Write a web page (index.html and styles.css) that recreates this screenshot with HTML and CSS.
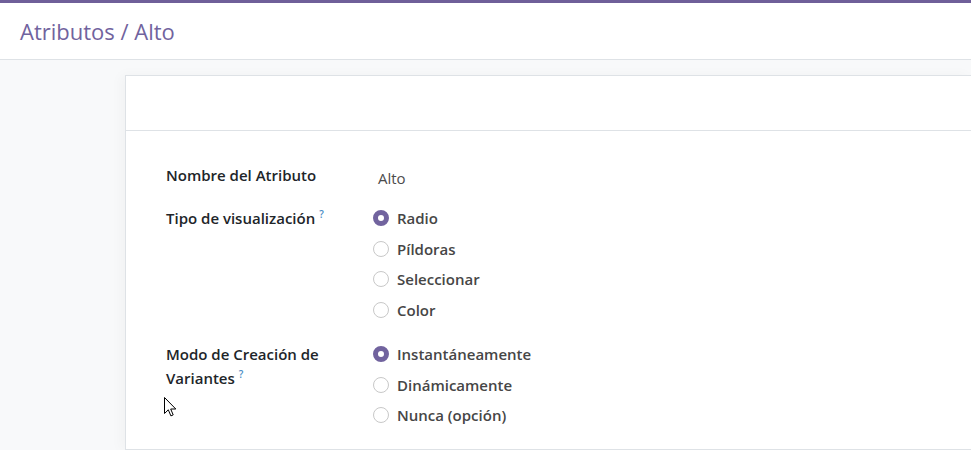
FILE: index.html
```html
<!DOCTYPE html>
<html lang="es">
<head>
<meta charset="utf-8">
<title>Atributos / Alto</title>
<link rel="stylesheet" href="styles.css">
</head>
<body>
<div class="topbar"></div>
<header class="control-panel">
  <h1 class="breadcrumb">Atributos / Alto</h1>
</header>
<main class="content">
  <section class="sheet">
    <div class="statusbar"></div>
    <div class="form">
      <div class="row row-name">
        <div class="label">Nombre del Atributo</div>
        <div class="value">Alto</div>
      </div>
      <div class="row">
        <div class="label">Tipo de visualización<sup>?</sup></div>
        <div class="options">
          <div class="option"><span class="radio checked"></span>Radio</div>
          <div class="option"><span class="radio"></span>Píldoras</div>
          <div class="option"><span class="radio"></span>Seleccionar</div>
          <div class="option"><span class="radio"></span>Color</div>
        </div>
      </div>
      <div class="row">
        <div class="label">Modo de Creación de Variantes<sup>?</sup></div>
        <div class="options">
          <div class="option"><span class="radio checked"></span>Instantáneamente</div>
          <div class="option"><span class="radio"></span>Dinámicamente</div>
          <div class="option"><span class="radio"></span>Nunca (opción)</div>
        </div>
      </div>
    </div>
  </section>
</main>
<svg class="cursor" width="13" height="21" viewBox="0 0 13 21" xmlns="http://www.w3.org/2000/svg">
  <path d="M0.5 0.5 L0.5 16.5 L4.3 12.8 L6.9 18.9 L9.2 17.9 L6.7 12 L11.8 12 Z" fill="#fff" stroke="#000" stroke-width="1" stroke-linejoin="miter"/>
</svg>
</body>
</html>
```
FILE: styles.css
```css
* { box-sizing: border-box; }
html, body { margin: 0; height: 100%; }
body {
  font-family: "Open Sans", "Noto Sans", sans-serif;
  font-size: 15px;
  color: #212529;
  background: #f8f9fa;
  overflow: hidden;
}
.topbar { height: 3px; background: #6f5f99; }
.control-panel {
  height: 57px;
  background: #fff;
  border-bottom: 1px solid #dee2e6;
  display: flex;
  align-items: center;
  padding-left: 20px;
}
.breadcrumb {
  margin: 0;
  font-size: 22px;
  font-weight: 400;
  color: #71639e;
}
.content {
  padding: 15px 0 0 125px;
  height: calc(100% - 60px);
}
.sheet {
  background: #fff;
  border: 1px solid #dee2e6;
  border-right: none;
  height: 100%;
  box-shadow: -4px 0 12px rgba(0,0,0,0.03);
}
.statusbar {
  height: 55px;
  border-bottom: 1px solid #dee2e6;
}
.form { padding: 32px 0 0 40px; }
.row {
  display: grid;
  grid-template-columns: 207px 1fr;
  margin-bottom: 13px;
}
.row:nth-child(2) { margin-bottom: 20px; }
.label {
  font-weight: 600;
  line-height: 24px;
  width: 180px;
  color: #212529;
}
.label sup {
  display: inline-block;
  font-size: 10px;
  line-height: 10px;
  color: #4a8cc4;
  margin-left: 4px;
  font-weight: 600;
  vertical-align: 6px;
}
.value {
  height: 30px;
  line-height: 30px;
  padding-left: 5px;
  color: #4c4c4c;
  font-weight: 400;
}
.option {
  display: flex;
  align-items: center;
  height: 24px;
  margin-bottom: 6.7px;
  font-weight: 600;
  color: #464646;
}
.option:last-child { margin-bottom: 0; }
.radio {
  width: 16px;
  height: 16px;
  border-radius: 50%;
  border: 1px solid #c8c8c8;
  background: #fff;
  margin-right: 8px;
  flex: none;
}
.radio.checked {
  border: 5px solid #71639e;
  background: #fff;
}
.cursor {
  position: absolute;
  left: 164px;
  top: 397px;
}
```
